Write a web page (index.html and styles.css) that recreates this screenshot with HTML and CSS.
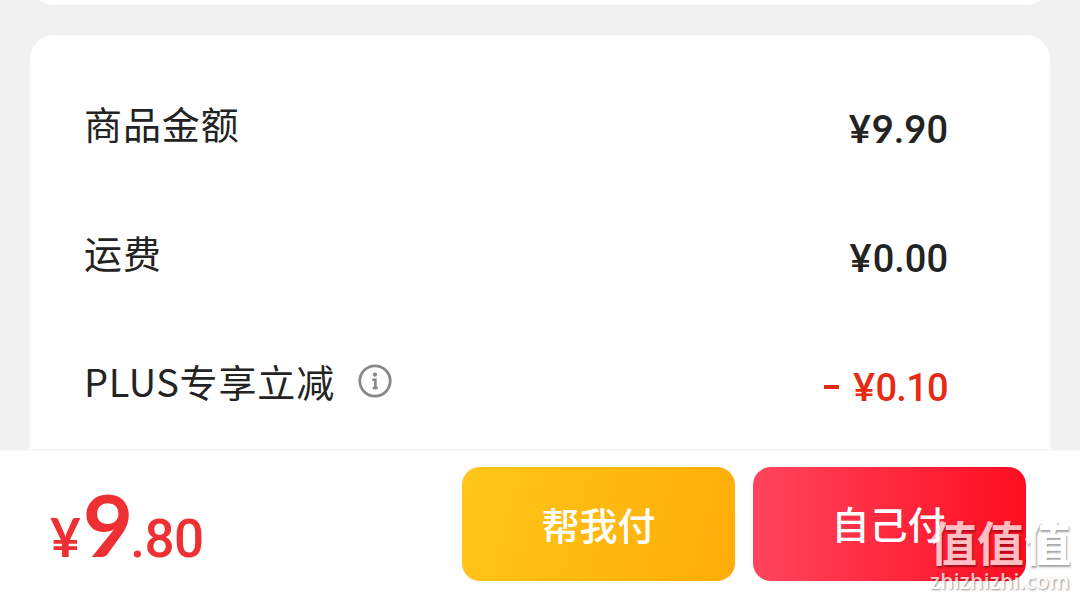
FILE: index.html
```html
<!DOCTYPE html>
<html lang="zh-CN">
<head>
<meta charset="utf-8">
<title>结算</title>
<link rel="stylesheet" href="styles.css">
</head>
<body>
<main class="page">
  <section class="card card-prev"></section>
  <section class="card card-bill">
    <div class="row">
      <span class="label">商品金额</span>
      <span class="price"><span class="geo yen-sm">¥</span><span class="geo">9</span>.<span class="geo">9</span>0</span>
    </div>
    <div class="row">
      <span class="label">运费</span>
      <span class="price price-fee"><span class="geo yen-sm">¥</span>0.00</span>
    </div>
    <div class="row">
      <span class="label"><span class="latin">PLUS</span>专享立减</span>
      <svg class="info" viewBox="0 0 34 34" fill="none">
        <circle cx="17" cy="17" r="15.2" stroke="#888" stroke-width="2.8"/>
        <circle cx="17" cy="10.6" r="2.2" fill="#888"/>
        <path d="M14.4 15.8h3v8.2M14.6 24h5.2" stroke="#888" stroke-width="2.6"/>
      </svg>
      <span class="price price-cut"><span class="minus"></span><span class="geo yen-sm">¥</span>0.10</span>
    </div>
  </section>
  <footer class="bar">
    <div class="total"><span class="yen">¥</span><span class="whole">9</span><span class="cents">.80</span></div>
    <button class="btn btn-help">帮我付</button>
    <button class="btn btn-self">自己付</button>
  </footer>
  <div class="watermark">
    <div class="mark-name">值值值</div>
    <div class="mark-site">zhizhizhi.com</div>
  </div>
</main>
</body>
</html>
```
FILE: styles.css
```css
* { box-sizing: border-box; }
body { margin: 0; }
.page {
  position: relative;
  display: flex;
  flex-direction: column;
  width: 1080px;
  height: 599px;
  overflow: hidden;
  background: #f1f1f1;
  font-family: "Noto Sans CJK SC", sans-serif;
  color: #232323;
}
.card { margin: 0 30px; background: #fff; }
.card-prev {
  flex: none;
  height: 24px;
  margin-top: -19px;
  border-radius: 0 0 24px 24px;
}
.card-bill {
  flex: none;
  height: 414px;
  margin-top: 30px;
  padding: 23px 102px 0 54px;
  border-radius: 24px 24px 0 0;
}
.row { display: flex; align-items: center; height: 129px; }
.label { font-size: 38px; line-height: 56px; letter-spacing: 0.9px; white-space: nowrap; }
.latin { letter-spacing: 0.6px; }
.info { width: 34px; height: 34px; margin-left: 23px; }
.price {
  display: flex;
  align-items: baseline;
  margin-left: auto;
  padding-top: 12px;
  font: 500 38px/46px Roboto, sans-serif;
  letter-spacing: 0;
}
.geo { font-family: Lato, sans-serif; font-weight: 700; }
.yen-sm { margin-right: 1px; }
.price-cut { color: #e52b14; letter-spacing: -0.7px; }
.minus { align-self: center; width: 15px; height: 4px; margin-right: 14px; background: currentColor; }
.bar {
  display: flex;
  align-items: flex-start;
  flex: none;
  height: 150px;
  padding: 16px 54px 0 50px;
  border-top: 2px solid #f5f5f5;
  background: #fff;
}
.total {
  display: flex;
  align-items: baseline;
  flex: 1;
  margin-top: -3px;
  font-family: Roboto, sans-serif;
  font-weight: 500;
  line-height: 120px;
  color: #ee3033;
}
.yen { font-family: Lato, sans-serif; font-weight: 700; font-size: 53px; }
.whole { margin: 0 -3px 0 2px; font-family: Lato, sans-serif; font-size: 87px; font-weight: 700; }
.cents { font-size: 53px; letter-spacing: -0.5px; }
.btn {
  width: 273px;
  height: 114px;
  padding: 0;
  border: 0;
  border-radius: 18px;
  font: 500 38px/114px "Noto Sans CJK SC", sans-serif;
  color: #fff;
}
.btn-help { background: linear-gradient(105deg, #ffc619, #ffac09); }
.btn-self { margin-left: 18px; padding: 0 2px 3px 0; line-height: 110px; background: linear-gradient(90deg, #ff455d, #ff0d20); }
.watermark {
  position: absolute;
  left: 930px;
  top: 512px;
  color: #fff;
  opacity: 0.72;
  white-space: nowrap;
}
.mark-name {
  font-size: 47px;
  font-weight: 700;
  line-height: 58px;
  text-shadow: 1px 2px 2px rgba(0, 0, 0, 0.5);
}
.mark-site {
  font: 600 21px/22px "Open Sans", sans-serif;
  letter-spacing: 0.2px;
  text-shadow: 1px 1px 2px rgba(0, 0, 0, 0.6);
}
```
